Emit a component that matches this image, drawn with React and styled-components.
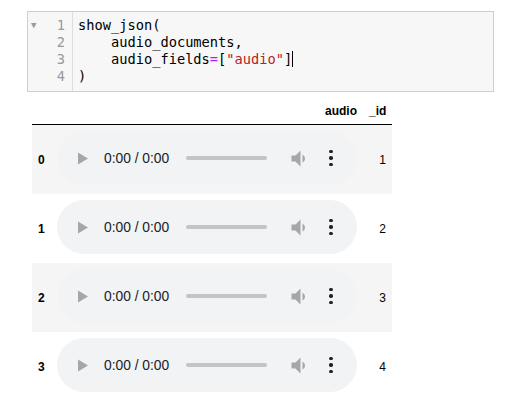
import React from 'react';
import styled, { createGlobalStyle } from 'styled-components';

const Global = createGlobalStyle`
    body {
        margin: 0;
        background: #fff;
        font-family: "Liberation Sans", Arial, sans-serif;
    }
`;

const Page = styled.div`
    padding: 11px 0 0 27px;
`;

const CodeCell = styled.div`
    display: flex;
    width: 465px;
    border: 1px solid #cfcfcf;
    background: #f7f7f7;
    font-family: "DejaVu Sans Mono", monospace;
    font-size: 13.7px;
    line-height: 17px;
`;

const Gutter = styled.div`
    position: relative;
    width: 45px;
    border-right: 1px solid #ddd;
    padding: 5px 0 6px;
    color: #999;
    text-align: right;
    box-sizing: border-box;
`;

const Fold = styled.span`
    position: absolute;
    left: 3px;
    top: 5px;
    font-size: 9px;
    color: #999;
`;

const LineNo = styled.div`
    padding-right: 7px;
`;

const Code = styled.div`
    padding: 5px 0 6px 5px;
    color: #000;
    white-space: pre;
`;

const Op = styled.span`
    color: #aa22ff;
`;

const Str = styled.span`
    color: #ba2121;
`;

const Cursor = styled.span`
    border-left: 1px solid #000;
`;

const Table = styled.div`
    margin: 6px 0 0 5px;
    width: 360px;
    font-size: 12px;
    color: #000;
`;

const Row = styled.div`
    display: grid;
    grid-template-columns: 19px 312px 29px;
    height: ${p => (p.head ? '26px' : '69px')};
    align-items: center;
    background: ${p => (p.striped ? '#f5f5f5' : 'transparent')};
    border-bottom: ${p => (p.head ? '1px solid #000' : 'none')};
`;

const Cell = styled.div`
    padding: 0 6px;
    text-align: right;
    font-weight: ${p => (p.bold ? 'bold' : 'normal')};
`;

const IndexCell = styled(Cell)`
    padding: 0 0 0 6px;
    text-align: left;
`;

const PlayerCell = styled.div`
    padding: 0 6px;
    align-self: start;
    padding-top: 6px;
`;

const Player = styled.div`
    display: flex;
    align-items: center;
    width: 300px;
    height: 54px;
    border-radius: 27px;
    background: #f1f3f4;
    box-sizing: border-box;
    padding-left: 20px;
`;

const Time = styled.span`
    margin-left: 15px;
    font-size: 13.8px;
    color: #202124;
    width: 82px;
`;

const Track = styled.div`
    width: 81px;
    height: 4px;
    border-radius: 2px;
    background: #c4c4c4;
`;

const Volume = styled.svg`
    margin-left: 24px;
`;

const Dots = styled.div`
    display: flex;
    flex-direction: column;
    gap: 3px;
    margin-left: 23px;

    span {
        width: 3.5px;
        height: 3.5px;
        border-radius: 50%;
        background: #202124;
    }
`;

const PlayIcon = () => (
    <svg width="12" height="13" viewBox="0 0 12 13">
        <path d="M1 0.5 L11 6.5 L1 12.5 Z" fill="#a6a6a6" />
    </svg>
);

const AudioPlayer = () => (
    <Player>
        <PlayIcon />
        <Time>0:00 / 0:00</Time>
        <Track />
        <Volume width="15" height="17" viewBox="3.5 3.5 15 17">
            <path d="M4 9v6h4l5 5V4L8 9H4z" fill="#a6a6a6" />
            <path d="M17.5 12A4.5 4.5 0 0 0 15 7.97v8.05c1.48-.73 2.5-2.25 2.5-4.02z" fill="#a6a6a6" />
        </Volume>
        <Dots>
            <span />
            <span />
            <span />
        </Dots>
    </Player>
);

const rows = [0, 1, 2, 3];

export default function App() {
    return (
        <Page>
            <Global />
            <CodeCell>
                <Gutter>
                    <Fold>▼</Fold>
                    {[1, 2, 3, 4].map(n => (
                        <LineNo key={n}>{n}</LineNo>
                    ))}
                </Gutter>
                <Code>
                    <div>show_json(</div>
                    <div>    audio_documents,</div>
                    <div>
                        {'    audio_fields'}<Op>=</Op>[<Str>"audio"</Str>]<Cursor />
                    </div>
                    <div>)</div>
                </Code>
            </CodeCell>
            <Table>
                <Row head>
                    <Cell />
                    <Cell bold>audio</Cell>
                    <Cell bold>_id</Cell>
                </Row>
                {rows.map(i => (
                    <Row key={i} striped={i % 2 === 0}>
                        <IndexCell bold>{i}</IndexCell>
                        <PlayerCell>
                            <AudioPlayer />
                        </PlayerCell>
                        <Cell>{i + 1}</Cell>
                    </Row>
                ))}
            </Table>
        </Page>
    );
}
